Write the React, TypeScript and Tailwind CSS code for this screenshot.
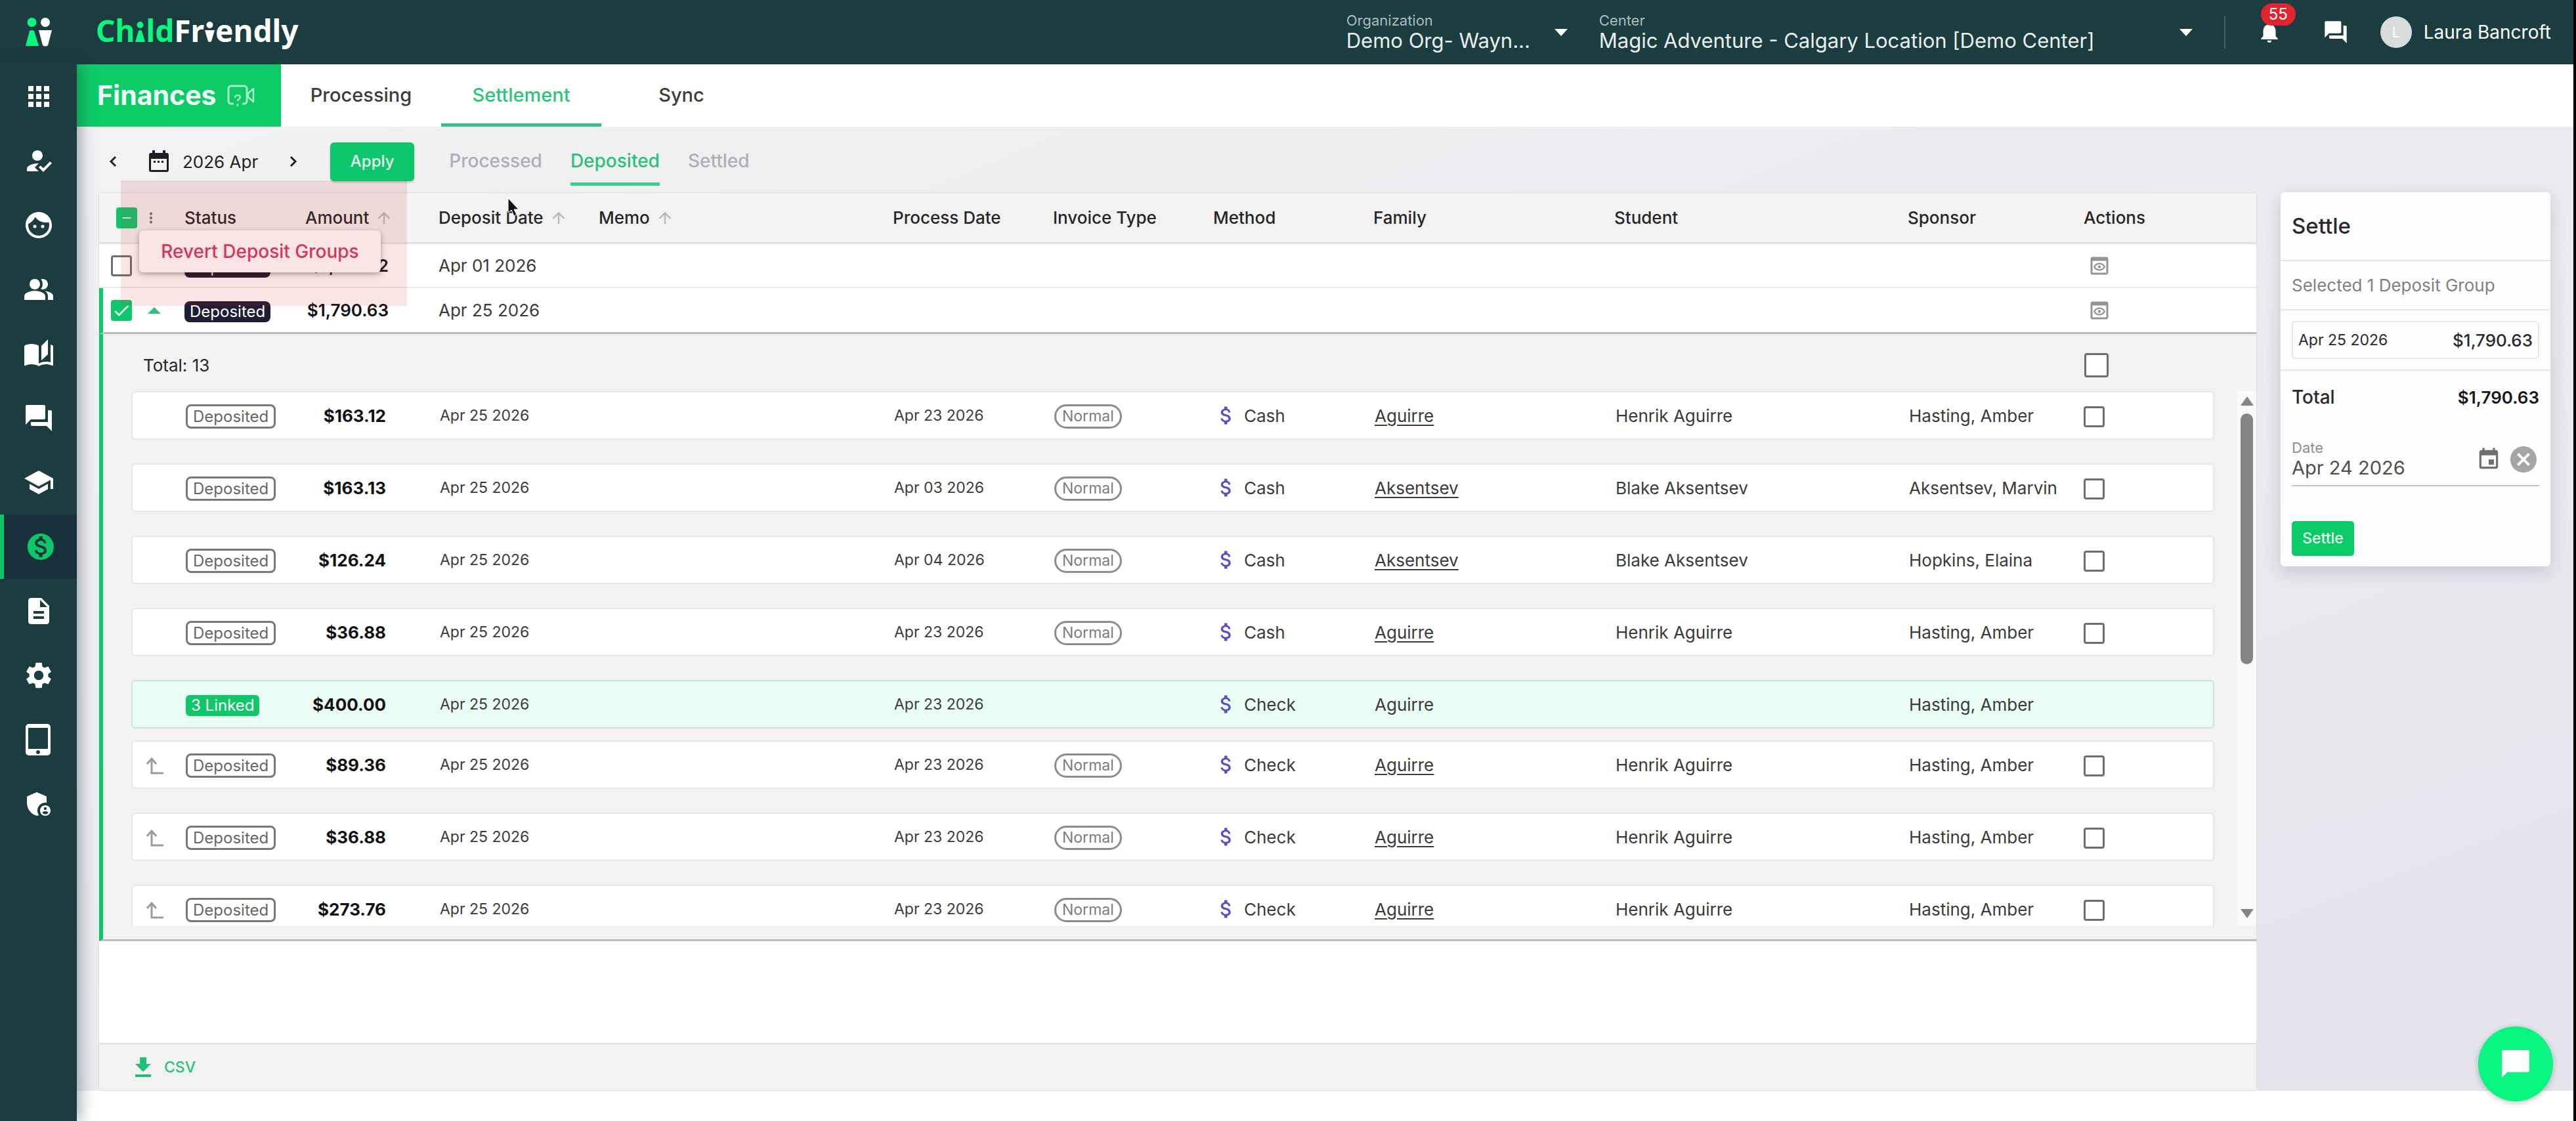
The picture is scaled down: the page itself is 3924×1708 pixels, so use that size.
import { useState } from "react";
import type { ReactNode } from "react";
import type { IconType } from "react-icons";
import {
  MdAdminPanelSettings,
  MdApps,
  MdArrowUpward,
  MdAttachMoney,
  MdAutoStories,
  MdCancel,
  MdCheck,
  MdDescription,
  MdEvent,
  MdFace,
  MdForum,
  MdHowToReg,
  MdMonetizationOn,
  MdMoreVert,
  MdNotifications,
  MdOutlinePreview,
  MdPeopleAlt,
  MdRemove,
  MdSchool,
  MdSettings,
  MdTabletMac,
} from "react-icons/md";

interface Deposit {
  id: number;
  amount: string;
  processDate: string;
  method: "Cash" | "Check";
  family: string;
  student: string;
  sponsor: string;
  kind?: "group" | "linked";
}

const navItems: { label: string; icon: IconType }[] = [
  { label: "Dashboard", icon: MdApps },
  { label: "Attendance", icon: MdHowToReg },
  { label: "Children", icon: MdFace },
  { label: "Families", icon: MdPeopleAlt },
  { label: "Curriculum", icon: MdAutoStories },
  { label: "Messages", icon: MdForum },
  { label: "Classes", icon: MdSchool },
  { label: "Finances", icon: MdMonetizationOn },
  { label: "Reports", icon: MdDescription },
  { label: "Settings", icon: MdSettings },
  { label: "Devices", icon: MdTabletMac },
  { label: "Admin", icon: MdAdminPanelSettings },
];

const deposits: Deposit[] = [
  { id: 1, amount: "$163.12", processDate: "Apr 23 2026", method: "Cash", family: "Aguirre", student: "Henrik Aguirre", sponsor: "Hasting, Amber" },
  { id: 2, amount: "$163.13", processDate: "Apr 03 2026", method: "Cash", family: "Aksentsev", student: "Blake Aksentsev", sponsor: "Aksentsev, Marvin" },
  { id: 3, amount: "$126.24", processDate: "Apr 04 2026", method: "Cash", family: "Aksentsev", student: "Blake Aksentsev", sponsor: "Hopkins, Elaina" },
  { id: 4, amount: "$36.88", processDate: "Apr 23 2026", method: "Cash", family: "Aguirre", student: "Henrik Aguirre", sponsor: "Hasting, Amber" },
  { id: 5, amount: "$400.00", processDate: "Apr 23 2026", method: "Check", family: "Aguirre", student: "", sponsor: "Hasting, Amber", kind: "group" },
  { id: 6, amount: "$89.36", processDate: "Apr 23 2026", method: "Check", family: "Aguirre", student: "Henrik Aguirre", sponsor: "Hasting, Amber", kind: "linked" },
  { id: 7, amount: "$36.88", processDate: "Apr 23 2026", method: "Check", family: "Aguirre", student: "Henrik Aguirre", sponsor: "Hasting, Amber", kind: "linked" },
  { id: 8, amount: "$273.76", processDate: "Apr 23 2026", method: "Check", family: "Aguirre", student: "Henrik Aguirre", sponsor: "Hasting, Amber", kind: "linked" },
];

function PeopleMark() {
  return (
    <svg width="40" height="46" viewBox="0 0 40 46" aria-hidden="true">
      <circle cx="9.5" cy="8" r="7" fill="#0bf57f" />
      <circle cx="30" cy="8" r="7" fill="#fff" />
      <path d="M6 21q3.500-2 7 0l7 23H0z" fill="#0bf57f" />
      <path d="M20 20h20l-6 23q-4 3-8 0z" fill="#fff" />
    </svg>
  );
}

function Wordmark() {
  return (
    <div className="flex items-baseline font-['Noto_Sans',sans-serif] text-[46px] leading-[56px] font-bold text-white">
      <span className="text-[#0bf57f]">Ch</span>
      <svg width="17" height="34" viewBox="0 0 17 34" aria-label="i">
        <circle cx="8.5" cy="8" r="5" fill="#0bf57f" />
        <path d="M6 17q2.500-2 5 0l5 17H1z" fill="#0bf57f" />
      </svg>
      <span className="text-[#0bf57f]">ld</span>
      <span>Fr</span>
      <svg width="17" height="34" viewBox="0 0 17 34" aria-label="i">
        <circle cx="8.5" cy="8" r="5" fill="#fff" />
        <path d="M1 16h15l-5 17q-2.500 2-5 0z" fill="#fff" />
      </svg>
      <span>endly</span>
    </div>
  );
}

function Checkbox({
  label,
  checked = false,
  indeterminate = false,
  large = false,
}: Readonly<{
  label: string;
  checked?: boolean;
  indeterminate?: boolean;
  large?: boolean;
}>) {
  const [on, setOn] = useState(checked || indeterminate);
  const Mark = indeterminate ? MdRemove : MdCheck;

  return (
    <span className="inline-grid align-middle">
      <input
        type="checkbox"
        aria-label={label}
        checked={on}
        onChange={() => setOn(!on)}
        className={`col-start-1 row-start-1 appearance-none rounded-[4px] border-[3px] ${
          large ? "size-[37px]" : "size-8"
        } ${on ? "border-[#0fc76b] bg-[#0fc76b]" : "border-[#6e6e6e] bg-white"}`}
      />
      {on && (
        <Mark
          size={indeterminate ? 22 : 30}
          className="pointer-events-none col-start-1 row-start-1 place-self-center text-white"
        />
      )}
    </span>
  );
}

function HeaderSelect({
  id,
  label,
  value,
  className,
}: Readonly<{ id: string; label: string; value: string; className: string }>) {
  return (
    <div className={`grid items-center ${className}`}>
      <div className="col-start-1 row-start-1 flex flex-col">
        <label htmlFor={id} className="text-[22px] leading-[26px] text-[#a9bcbc]">
          {label}
        </label>
        <select
          id={id}
          className="w-full appearance-none bg-transparent text-[31px] leading-[36px] text-[#e9efef]"
        >
          <option>{value}</option>
        </select>
      </div>
      <svg
        width="20"
        height="11"
        viewBox="0 0 20 11"
        className="pointer-events-none col-start-1 row-start-1 justify-self-end"
        aria-hidden="true"
      >
        <path d="M0 0h20L10 11z" fill="#fff" />
      </svg>
    </div>
  );
}

function TopBar() {
  return (
    <header className="flex h-[98px] shrink-0 items-center bg-[#1c3d3f] pr-[34px] text-white">
      <div className="flex w-[117px] justify-center">
        <PeopleMark />
      </div>
      <div className="pb-1.5 pl-[29px]">
        <Wordmark />
      </div>
      <div className="ml-auto flex items-center">
        <HeaderSelect id="organization" label="Organization" value="Demo Org- Wayn..." className="w-[337px]" />
        <HeaderSelect id="center" label="Center" value="Magic Adventure - Calgary Location [Demo Center]" className="ml-12 w-[904px]" />
        <div className="ml-12 h-[50px] w-0.5 bg-[#46605f]" />
        <button aria-label="Notifications" className="relative ml-12">
          <MdNotifications size={38} />
          <span className="absolute -top-[25px] left-1.5 flex h-[34px] w-[53px] items-center justify-center rounded-full bg-[#e02430] text-[24px] leading-none">
            55
          </span>
        </button>
        <button aria-label="Messages" className="ml-[62px]">
          <MdForum size={40} />
        </button>
        <button className="ml-12 flex items-center gap-[18px] text-[28px]">
          <span className="flex size-12 items-center justify-center rounded-full bg-[#d9dcdc] text-[22px] text-white">
            L
          </span>
          Laura Bancroft
        </button>
      </div>
    </header>
  );
}

function SideNav() {
  return (
    <nav className="z-10 w-[117px] shrink-0 bg-[#1c3d3f] shadow-[4px_0_22px_rgba(40,50,70,0.45)]">
      {navItems.map(({ label, icon: Icon }) => (
        <a
          key={label}
          href="#"
          aria-label={label}
          className={`flex h-[98px] items-center justify-center ${
            label === "Finances"
              ? "border-l-[6px] border-[#0fc76b] bg-[#17323a] text-[#0fc76b]"
              : "text-white"
          }`}
        >
          <Icon size={48} />
        </a>
      ))}
    </nav>
  );
}

function SectionTabs() {
  const tabs = ["Processing", "Settlement", "Sync"];
  const [active, setActive] = useState("Settlement");

  return (
    <div className="flex h-[95px] shrink-0 bg-white shadow-[0_1px_4px_rgba(0,0,0,0.12)]">
      <h1 className="flex w-[311px] items-center gap-4 bg-[#0ccb66] pl-[31px] text-[41px] font-bold text-[#effff5]">
        Finances
        <svg width="42" height="34" viewBox="0 0 42 34" fill="none" stroke="#a9f0c8" strokeWidth="3" aria-hidden="true">
          <path d="M10 29H6a4 4 0 0 1-4-4V6a4 4 0 0 1 4-4h20a4 4 0 0 1 4 4v19a4 4 0 0 1-4 4h-3" />
          <path d="M32 13l8-7v20l-8-7z" strokeLinejoin="round" strokeWidth="2.5" />
          <path d="M12 20c0-5 8-5 8-1 0 3-4 3-4 6M16 29v4" strokeWidth="2.5" />
        </svg>
      </h1>
      {tabs.map((tab) => (
        <button
          key={tab}
          onClick={() => setActive(tab)}
          className={`w-[244px] border-b-[5px] pt-1 text-[29px] font-medium ${
            active === tab ? "border-[#2fc47b] text-[#2fc47b]" : "border-transparent text-[#3c3c3c]"
          }`}
        >
          {tab}
        </button>
      ))}
    </div>
  );
}

function Chevron({ flip = false }: Readonly<{ flip?: boolean }>) {
  return (
    <svg width="12" height="18" viewBox="0 0 12 18" fill="none" stroke="#222" strokeWidth="3" aria-hidden="true">
      <path d={flip ? "M2 2l7 7-7 7" : "M10 2L3 9l7 7"} />
    </svg>
  );
}

function FilterBar() {
  const views = ["Processed", "Deposited", "Settled"];
  const [view, setView] = useState("Deposited");

  return (
    <div className="flex h-[100px] shrink-0 items-center pt-1.5 pl-[49px]">
      <button aria-label="Previous month">
        <Chevron />
      </button>
      <button className="ml-12 flex items-center gap-5 text-[26px] text-[#222]">
        <svg width="32" height="34" viewBox="0 0 32 34" aria-hidden="true">
          <path
            fill="#1d1d24"
            fillRule="evenodd"
            d="M6 0h4v4h12V0h4v4h2a3 3 0 0 1 3 3v23a3 3 0 0 1-3 3H4a3 3 0 0 1-3-3V7a3 3 0 0 1 3-3h2zM4 13v17h24V13z"
          />
          <path fill="#1d1d24" d="M8 16h3v3H8zM14 16h3v3h-3zM20 16h3v3h-3z" />
        </svg>
        2026 Apr
      </button>
      <button aria-label="Next month" className="ml-12">
        <Chevron flip />
      </button>
      <button className="ml-[50px] h-[59px] w-32 rounded-[6px] bg-[#0fc76b] text-[24px] font-medium text-[#e6fff1] shadow-[0_2px_3px_rgba(0,0,0,0.2)]">
        Apply
      </button>
      <div className="ml-[53px] flex gap-[43px] pt-0.5 text-[28px] font-medium">
        {views.map((v) => (
          <button
            key={v}
            onClick={() => setView(v)}
            className={`h-[72px] border-b-[5px] ${
              view === v ? "border-[#3fcb8a] text-[#2cc078]" : "border-transparent text-[#aeb0b4]"
            }`}
          >
            {v}
          </button>
        ))}
      </div>
    </div>
  );
}

function SortLabel({ children }: Readonly<{ children: ReactNode }>) {
  return (
    <button className="flex items-center gap-[9px]">
      {children}
      <MdArrowUpward size={28} className="text-[#b9b9b9]" />
    </button>
  );
}

function LinkedArrow() {
  return (
    <svg width="28" height="26" viewBox="0 0 28 26" fill="none" stroke="#9b9b9b" strokeWidth="3" className="mt-1" aria-hidden="true">
      <path d="M2 10l7-8 7 8M9 2v22h18" />
    </svg>
  );
}

function MethodCell({ method }: Readonly<{ method: string }>) {
  return (
    <span className="flex items-center gap-[9px]">
      <MdAttachMoney size={36} className="text-[#5a4fc0]" />
      {method}
    </span>
  );
}

function DepositRow({ deposit }: Readonly<{ deposit: Deposit }>) {
  const group = deposit.kind === "group";
  const cell = group
    ? "border-y-2 border-[#cfe3da] bg-[#e9fdf4]"
    : "border-y-2 border-[#e6e6e6] bg-white";

  return (
    <tr className="h-[74px] text-[26px] text-[#3a3a3a]">
      <td className={`${cell} rounded-l-[6px] border-l-2 pl-5`}>
        {deposit.kind === "linked" && <LinkedArrow />}
      </td>
      <td className={cell}>
        {group ? (
          <span className="inline-flex h-8 items-center rounded-[6px] bg-[#0fc76b] px-2 align-middle text-[24px] text-white">
            3 Linked
          </span>
        ) : (
          <span className="inline-flex h-[37px] items-center rounded-[8px] border-[3px] border-[#77777c] px-2 align-middle text-[24px] text-[#66666c]">
            Deposited
          </span>
        )}
      </td>
      <td className={`${cell} pr-[82px] text-right font-bold text-[#111]`}>
        {deposit.amount}
      </td>
      <td className={`${cell} text-[23px]`}>Apr 25 2026</td>
      <td className={cell} />
      <td className={`${cell} text-[23px]`}>{deposit.processDate}</td>
      <td className={cell}>
        {!group && (
          <span className="inline-flex h-[37px] items-center rounded-full border-[3px] border-[#8c8c8c] px-[9px] align-middle text-[23px] text-[#7c7c7c]">
            Normal
          </span>
        )}
      </td>
      <td className={cell}>
        <MethodCell method={deposit.method} />
      </td>
      <td className={cell}>
        {group ? (
          deposit.family
        ) : (
          <a href="#" className="underline decoration-2 underline-offset-4">
            {deposit.family}
          </a>
        )}
      </td>
      <td className={cell}>{deposit.student}</td>
      <td className={`${cell} whitespace-nowrap`}>{deposit.sponsor}</td>
      <td className={`${cell} rounded-r-[6px] border-r-2`}>
        {!group && <Checkbox label={`Select ${deposit.student} ${deposit.amount}`} />}
      </td>
    </tr>
  );
}

function DepositList() {
  return (
    <div className="flex h-[815px] justify-between overflow-hidden pl-[43px]">
      <table className="mr-[35px] h-fit w-full table-fixed border-separate border-spacing-0 text-left">
        <colgroup>
          <col className="w-[83px]" />
          <col className="w-[185px]" />
          <col className="w-[202px]" />
          <col className="w-[244px]" />
          <col />
          <col className="w-[244px]" />
          <col className="w-[244px]" />
          <col className="w-[244px]" />
          <col className="w-[367px]" />
          <col className="w-[447px]" />
          <col className="w-[266px]" />
          <col className="w-[199px]" />
        </colgroup>
        {deposits.map((deposit) => (
          <tbody key={deposit.id}>
            <DepositRow deposit={deposit} />
            <tr className={deposit.kind === "group" ? "h-[18px]" : "h-9"}>
              <td colSpan={12} />
            </tr>
          </tbody>
        ))}
      </table>
      <div className="flex w-[29px] shrink-0 flex-col items-center bg-[#fafafa] pt-2 pb-3">
        <svg width="20" height="14" viewBox="0 0 20 14" aria-hidden="true">
          <path d="M10 0l10 14H0z" fill="#858585" />
        </svg>
        <div className="mt-3 h-[382px] w-[19px] rounded-full bg-[#858585]" />
        <svg width="20" height="14" viewBox="0 0 20 14" className="mt-auto" aria-hidden="true">
          <path d="M0 0h20L10 14z" fill="#858585" />
        </svg>
      </div>
    </div>
  );
}

function GroupRow({
  date,
  amount,
  open = false,
}: Readonly<{ date: string; amount: string; open?: boolean }>) {
  const cell = open ? "border-b-[3px] border-b-[#bdbdbd]" : "border-b-2 border-b-[#e9e9e9]";

  return (
    <tr className={`bg-white text-[26px] text-[#3a3a3a] ${open ? "h-[70px]" : "h-[67px]"}`}>
      <td className={`${cell} ${open ? "border-l-[6px] border-l-[#0fc76b] pl-3" : "pl-[18px]"}`}>
        <div className="flex items-center gap-6">
          <Checkbox label={`Select deposit group ${date}`} checked={open} />
          {open && (
            <svg width="20" height="10" viewBox="0 0 20 10" aria-hidden="true">
              <path d="M10 0l10 10H0z" fill="#2cc078" />
            </svg>
          )}
        </div>
      </td>
      <td className={cell}>
        <span className="inline-flex h-8 items-center rounded-[8px] bg-[#1e1e34] px-2 align-middle text-[24px] text-white">
          Deposited
        </span>
      </td>
      <td className={`${cell} pr-[76px] text-right font-semibold text-[#111]`}>{amount}</td>
      <td className={cell}>{date}</td>
      <td className={cell} colSpan={7} />
      <td className={`${cell} pl-1.5`}>
        <button aria-label={`Preview ${date}`} className="block">
          <MdOutlinePreview size={36} className="text-[#949494]" />
        </button>
      </td>
    </tr>
  );
}

function SettlementCard() {
  return (
    <section className="relative flex min-w-0 flex-1 flex-col rounded-[4px] border border-[#dfe0e4] bg-white">
      <table className="w-full table-fixed border-separate border-spacing-0 text-left">
        <colgroup>
          <col className="w-[130px]" />
          <col className="w-[184px]" />
          <col className="w-[203px]" />
          <col className="w-[244px]" />
          <col />
          <col className="w-[244px]" />
          <col className="w-[244px]" />
          <col className="w-[244px]" />
          <col className="w-[367px]" />
          <col className="w-[447px]" />
          <col className="w-[268px]" />
          <col className="w-[263px]" />
        </colgroup>
        <thead className="bg-[#f2f2f2] text-[26px] text-[#262626]">
          <tr className="h-[78px] *:border-b-[3px] *:border-[#e5e5e5] *:p-0 *:font-medium">
            <th>
              <div className="flex items-center pl-[26px]">
                <Checkbox label="Select all deposit groups" indeterminate />
                <button aria-label="Group actions" className="ml-2">
                  <MdMoreVert size={26} className="text-[#777]" />
                </button>
              </div>
            </th>
            <th>Status</th>
            <th>
              <SortLabel>Amount</SortLabel>
            </th>
            <th>
              <SortLabel>Deposit Date</SortLabel>
            </th>
            <th>
              <SortLabel>Memo</SortLabel>
            </th>
            <th>Process Date</th>
            <th>Invoice Type</th>
            <th>Method</th>
            <th>Family</th>
            <th>Student</th>
            <th>Sponsor</th>
            <th>Actions</th>
          </tr>
        </thead>
        <tbody>
          <GroupRow date="Apr 01 2026" amount="$1,240.12" />
          <GroupRow date="Apr 25 2026" amount="$1,790.63" open />
          <tr>
            <td
              colSpan={12}
              className="border-b-[3px] border-l-[6px] border-b-[#bdbdbd] border-l-[#0fc76b] bg-[#f2f2f2] p-0 pb-5"
            >
              <div className="flex h-[87px] items-center justify-between pt-2 pr-[225px] pl-[61px] text-[26px] text-[#262626]">
                <span>Total: 13</span>
                <Checkbox label="Select all deposits" large />
              </div>
              <DepositList />
            </td>
          </tr>
        </tbody>
      </table>

      <footer className="mt-auto flex h-[72px] items-center border-t-2 border-[#e0e0e3] bg-[#f2f2f2] pl-[55px]">
        <button className="flex items-center gap-5 text-[23px] font-medium text-[#2cc078]">
          <svg width="24" height="30" viewBox="0 0 24 30" aria-hidden="true">
            <path d="M7 0h10v10h7L12 22 0 10h7zM0 26h24v4H0z" fill="#1fc272" />
          </svg>
          CSV
        </button>
      </footer>

      {/* Group actions menu */}
      <div
        role="menu"
        className="absolute top-[57px] left-[61px] flex h-16 w-[368px] items-center justify-center rounded-[6px] bg-white shadow-[0_3px_8px_rgba(0,0,0,0.35)]"
      >
        <button role="menuitem" className="text-[28px] font-medium text-[#d8375f]">
          Revert Deposit Groups
        </button>
      </div>
      <div className="pointer-events-none absolute -top-[19px] left-[33px] h-[191px] w-[436px] bg-[#d62828]/12" />
      <svg
        width="22"
        height="30"
        viewBox="0 0 22 30"
        className="pointer-events-none absolute top-[7px] left-[622px]"
        aria-hidden="true"
      >
        <path d="M1 1v22l5-4 4 9 4-2-4-8h7z" fill="#111" stroke="#fff" strokeWidth="1" />
      </svg>
    </section>
  );
}

function SettlePanel() {
  return (
    <aside className="w-[411px] shrink-0 self-start rounded-[6px] bg-[#fdfdfe] text-[#2a2a2e] shadow-[0_8px_24px_rgba(60,60,90,0.2)]">
      <h2 className="flex h-[105px] items-center border-b-2 border-[#e6e7eb] px-[17px] text-[33px] font-medium">
        Settle
      </h2>
      <p className="flex h-[75px] items-center border-b-2 border-[#e6e7eb] px-[17px] text-[26px] text-[#808085]">
        Selected 1 Deposit Group
      </p>
      <div className="border-b-2 border-[#e6e7eb] px-[17px] py-4">
        <div className="flex h-[58px] items-center justify-between rounded-[6px] border-2 border-[#e6e7eb] px-2">
          <span className="text-[23px]">Apr 25 2026</span>
          <span className="text-[26px] font-medium">$1,790.63</span>
        </div>
      </div>
      <div className="flex h-20 items-center justify-between px-[17px]">
        <span className="text-[28px] font-medium">Total</span>
        <span className="text-[26px] font-semibold text-[#17171b]">$1,790.63</span>
      </div>
      <div className="mx-[17px] mt-6 flex items-center border-b-2 border-[#c4c4c8] pb-2">
        <div className="flex min-w-0 flex-1 flex-col">
          <label htmlFor="settle-date" className="text-[22px] leading-[26px] text-[#8d8d92]">
            Date
          </label>
          <input
            id="settle-date"
            defaultValue="Apr 24 2026"
            className="w-full bg-transparent text-[29px] leading-[36px] text-[#4f4f55] outline-none"
          />
        </div>
        <button aria-label="Pick a date">
          <MdEvent size={38} className="text-[#6d6d72]" />
        </button>
        <button aria-label="Clear date" className="ml-2.5">
          <MdCancel size={48} className="text-[#a5a5a8]" />
        </button>
      </div>
      <div className="px-[17px] pt-[53px] pb-4">
        <button className="h-[53px] w-[95px] rounded-[5px] bg-[#0acb68] text-[23px] font-medium text-[#e6fff1]">
          Settle
        </button>
      </div>
    </aside>
  );
}

export default function App() {
  return (
    <div className="flex min-h-screen flex-col border-r-4 border-black bg-white font-[Inter,sans-serif]">
      <TopBar />
      <div className="flex flex-1">
        <SideNav />
        <main className="flex min-w-0 flex-1 flex-col pb-[46px]">
          <SectionTabs />
          <div className="flex flex-1 flex-col bg-linear-to-br from-[#f2f2f3] to-[#e3e4ec]">
            <FilterBar />
            <div className="flex flex-1 gap-9 pr-[35px] pl-[33px]">
              <SettlementCard />
              <SettlePanel />
            </div>
          </div>
        </main>
      </div>
      <button
        aria-label="Open chat"
        className="fixed right-[35px] bottom-[30px] flex size-[114px] items-center justify-center rounded-full bg-[#08f57f] shadow-[0_2px_8px_rgba(0,0,0,0.25)]"
      >
        <svg width="42" height="42" viewBox="0 0 20 20" aria-hidden="true">
          <path d="M1 0h18a1 1 0 0 1 1 1v14a1 1 0 0 1-1 1H4l-4 4V1a1 1 0 0 1 1-1z" fill="#fff" />
        </svg>
      </button>
    </div>
  );
}
